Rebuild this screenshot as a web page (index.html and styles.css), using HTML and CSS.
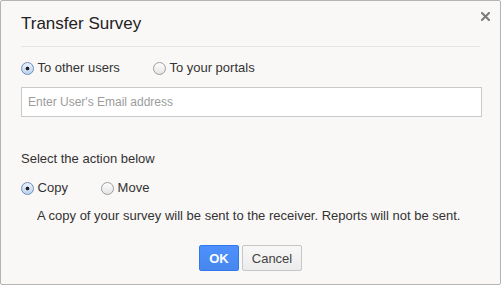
FILE: index.html
```html
<!DOCTYPE html>
<html>

<head>
    <link rel="stylesheet" href="styles.css">
</head>

<body>
    <div class="dialog">
        <div class="dialog-header">
            <h2 class="dialog-title">Transfer Survey</h2>
            <span class="close-btn">
                <svg width="9" height="9" viewBox="0 0 9 9">
                    <path d="M1 1L8 8M8 1L1 8" stroke="#7a7a7a" stroke-width="2" stroke-linecap="square" />
                </svg>
            </span>
        </div>

        <div class="dialog-body">
            <div class="radio-row target-row">
                <label class="radio-label"><input type="radio" name="target" checked> To other users</label>
                <label class="radio-label"><input type="radio" name="target"> To your portals</label>
            </div>

            <input class="email-input" type="text" placeholder="Enter User's Email address">

            <div class="section-label">Select the action below</div>

            <div class="radio-row action-row">
                <label class="radio-label"><input type="radio" name="action" checked> Copy</label>
                <label class="radio-label"><input type="radio" name="action"> Move</label>
            </div>

            <div class="action-note">A copy of your survey will be sent to the receiver. Reports will not be sent.</div>
        </div>

        <div class="dialog-footer">
            <button class="btn btn-primary">OK</button>
            <button class="btn btn-cancel">Cancel</button>
        </div>
    </div>
</body>

</html>
```

FILE: styles.css
```css
body {
    margin: 0;
    background: #fff;
    font-family: 'Liberation Sans', Arial, sans-serif;
    color: #333;
}

.dialog {
    position: relative;
    box-sizing: border-box;
    width: 501px;
    height: 285px;
    background: #f9f8f6;
    border: 1px solid #b4b4b4;
    border-radius: 2px;
}

.dialog-header {
    padding: 11px 20px 0;
}

.dialog-title {
    margin: 0;
    padding-bottom: 10px;
    border-bottom: 1px solid #e6e5e3;
    font-size: 17px;
    font-weight: normal;
    line-height: 24px;
    color: #222;
}

.close-btn {
    position: absolute;
    top: 11px;
    right: 10px;
    width: 9px;
    height: 9px;
    line-height: 0;
}

.dialog-body {
    padding: 13px 20px 0;
    font-size: 13px;
    line-height: 16px;
}

.radio-row {
    display: flex;
}

.radio-label {
    display: flex;
    align-items: center;
    white-space: pre;
}

.target-row .radio-label {
    width: 132px;
}

.action-row .radio-label {
    width: 80px;
}

.radio-label input {
    appearance: none;
    -webkit-appearance: none;
    box-sizing: border-box;
    width: 13px;
    height: 13px;
    margin: 0;
    border: 1px solid #9d9d9d;
    border-radius: 50%;
    background: linear-gradient(#fdfdfd, #e4e4e4);
}

.radio-label input:checked {
    border-color: #6e8fb8;
    background: radial-gradient(circle, #222 0, #222 1.6px, transparent 2.2px), linear-gradient(#e8f1fc, #bcd3f0);
}

.email-input {
    display: block;
    box-sizing: border-box;
    width: 461px;
    height: 30px;
    margin-top: 11px;
    padding: 0 6px;
    border: 1px solid #c9c9c9;
    background: #fff;
    font-family: inherit;
    font-size: 12px;
    outline: none;
}

.email-input::placeholder {
    color: #9c9c9c;
}

.section-label {
    margin-top: 34px;
}

.action-row {
    margin-top: 13px;
}

.action-note {
    margin-top: 12px;
    padding-left: 16px;
}

.dialog-footer {
    display: flex;
    justify-content: center;
    gap: 3px;
    margin-top: 21px;
}

.btn {
    box-sizing: border-box;
    height: 26px;
    padding: 0;
    border: 1px solid #c6c6c6;
    border-radius: 2px;
    background: linear-gradient(#f8f8f8, #ececec);
    font-family: inherit;
    font-size: 13px;
    color: #444;
}

.btn-cancel {
    width: 60px;
}

.btn-primary {
    width: 40px;
    border-color: #3079ed;
    background: linear-gradient(#4d90fe, #4787ed);
    color: #fff;
    font-weight: bold;
}
```
